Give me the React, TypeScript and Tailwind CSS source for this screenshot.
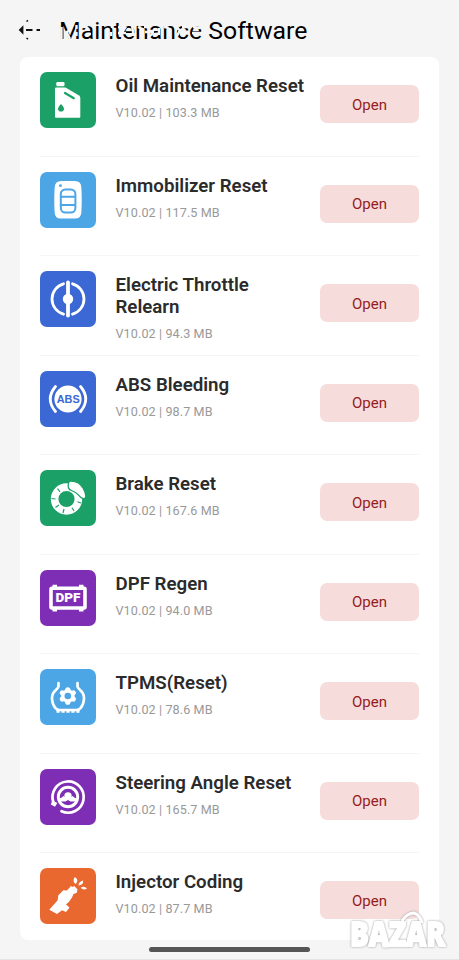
import React from 'react';

interface SoftwareItem {
  name: string;
  size: string;
  color: string;
  icon: React.ReactNode;
}

const OilIcon = () => (
  <>
    <path d="M16 15.500h9.500l13.500 8q1.300.8 1.300 2.500v18.700q0 1-1 1h-23.300q-1 0-1-1v-28.200q0-1 1-1z" fill="#fff" />
    <rect x="16.300" y="10" width="8.200" height="4.300" rx="1.200" fill="#fff" />
    <path d="M25 21l8.800 5.200" stroke="#1ba167" strokeWidth="2.200" strokeLinecap="round" />
    <path d="M21 32q3 3.300 3 4.800a3 2.800 0 0 1-6 0q0-1.500 3-4.800z" fill="#1ba167" />
  </>
);

const KeyIcon = () => (
  <>
    <path d="M21 9h14q6 0 6.300 6c.6 9 .6 17 0 26q-.5 5.500-6.300 5.500h-14q-6 0-6.300-5.500c-.6-9-.6-17 0-26q.5-6 6.300-6z" fill="#fff" />
    <rect x="20.800" y="17.500" width="14.600" height="23" rx="4.500" fill="none" stroke="#4ca6e6" strokeWidth="2" />
    <path d="M20.500 24.700h15M20.500 33h15" stroke="#4ca6e6" strokeWidth="2" />
    <circle cx="20.500" cy="13.700" r="1.400" fill="#4ca6e6" />
  </>
);

const ThrottleIcon = () => (
  <>
    <g fill="none" stroke="#fff" strokeWidth="2.800" strokeLinecap="round">
      <path d="M23.500 12.800a15.800 15.800 0 0 0 0 30.400M32.500 12.800a15.800 15.800 0 0 1 0 30.400" />
      <path d="M28 11.500v33" strokeWidth="3.800" />
    </g>
    <circle cx="28" cy="28" r="5.200" fill="#fff" />
  </>
);

const AbsIcon = () => (
  <>
    <circle cx="28" cy="28" r="13.600" fill="#fff" />
    <path d="M15.500 15.500q-10.500 12.500 0 25M40.500 15.500q10.500 12.500 0 25" fill="none" stroke="#fff" strokeWidth="2.800" strokeLinecap="round" />
    <text x="28.200" y="31.800" textAnchor="middle" fontSize="10.800" fontWeight="700" textLength="23" lengthAdjust="spacingAndGlyphs" fill="#3b68d4" className="font-['Liberation_Sans',sans-serif]">ABS</text>
  </>
);

const BrakeIcon = () => (
  <>
    <circle cx="26.500" cy="29" r="11.900" fill="none" stroke="#fff" strokeWidth="7.600" />
    <path d="M17.500 18.500l2.500 3.500M11.500 28.500l4 .5M15.500 37.500l3.500-2.500M23 43l1-4M34 41l-2-3.300M41 33l-3.500-1.200" stroke="#1ba167" strokeWidth="1.200" />
    <path d="M29.500 11.300q9-.8 13.500 6.700q2.200 3.800 2.800 7.700q.2 3.300-3 2.800q-1.800-.5-4-3.200q-2.500-3-7.300-4.800q-3.800-1.500-3.300-5.500q.1-2.700 1.300-3.700z" fill="#fff" stroke="#1ba167" strokeWidth="1.300" />
  </>
);

const DpfIcon = () => (
  <>
    <rect x="11" y="18.200" width="34" height="19.800" rx="1" fill="none" stroke="#fff" strokeWidth="3.600" />
    <path d="M12.500 16h4.500M39 16h4.500M12.500 40.200h4.500M39 40.200h4.500" stroke="#fff" strokeWidth="2.400" />
    <text x="28" y="32.300" textAnchor="middle" fontSize="12.300" fontWeight="900" textLength="25" lengthAdjust="spacingAndGlyphs" fill="#fff" className="font-['Roboto',sans-serif]">DPF</text>
  </>
);

const TpmsIcon = () => (
  <>
    <path d="M18.500 14.200v3c0 3.500-6.500 4-6.500 11.500q0 6 3.500 10.500q1.500 1.800 4 1.800h17q2.500 0 4-1.800q3.500-4.500 3.500-10.500c0-7.500-6.500-8-6.500-11.500v-3" fill="none" stroke="#fff" strokeWidth="2.700" strokeLinecap="round" />
    <path d="M16.500 42.300h23" stroke="#fff" strokeWidth="3" strokeDasharray="3.200 1.750" />
    <g stroke="#fff" strokeWidth="5.200" strokeLinecap="round">
      <path d="M27.800 20.800v12.400M22.400 23.900l10.800 6.200M33.200 23.900l-10.800 6.200" />
    </g>
    <circle cx="27.800" cy="27" r="6.800" fill="#fff" />
    <circle cx="27.800" cy="27" r="3.300" fill="#4ca6e6" />
  </>
);

const SteeringIcon = () => (
  <>
    <g fill="none" stroke="#fff">
      <path d="M13.300 33a15.600 15.600 0 1 1 8.200 9.200" strokeWidth="2.700" strokeLinecap="round" />
      <circle cx="28" cy="28" r="9.700" strokeWidth="2.900" />
      <path d="M19.500 31q2.500 0 5-3M36.500 31q-2.500 0-5-3" strokeWidth="3" />
    </g>
    <path d="M10.800 35.500l1.500-4l5 2.500l-2.300 3.800z" fill="#fff" />
    <circle cx="28" cy="27" r="3.700" fill="#fff" />
    <path d="M24.500 28h7l3.500 4.500h-4.500l-2.500-1.500l-2.500 1.500h-4.500z" fill="#fff" />
  </>
);

const InjectorIcon = () => (
  <>
    <path d="M9.300 41.700l8.400-9.400l.5-4.800l5.100-5.200l3.500.2l3-3l1.200-1.500l1.700 1l1.500-1l3.300 3.200l-.7 3.600l-3.300 1.200l-1.500 3.500l-3.200 4.500l-2.800 2.500l3.500 3l-3.500 4.500l-4-1.800l-5 3.800z" fill="#fff" />
    <path d="M34.800 9q4.500 3 1 7q-4-2.500-1-7zM43.200 12.500q0 4.800-4.700 5q.2-4 4.700-5zM47 20.600q-3.500 2.300-6.300-.8q3.500-2.400 6.300.8z" fill="#fff" />
  </>
);

const ITEMS: SoftwareItem[] = [
  { name: 'Oil Maintenance Reset', size: '103.3 MB', color: 'bg-[#1ba167]', icon: <OilIcon /> },
  { name: 'Immobilizer Reset', size: '117.5 MB', color: 'bg-[#4ca6e6]', icon: <KeyIcon /> },
  { name: 'Electric Throttle Relearn', size: '94.3 MB', color: 'bg-[#3b68d4]', icon: <ThrottleIcon /> },
  { name: 'ABS Bleeding', size: '98.7 MB', color: 'bg-[#3b68d4]', icon: <AbsIcon /> },
  { name: 'Brake Reset', size: '167.6 MB', color: 'bg-[#1ba167]', icon: <BrakeIcon /> },
  { name: 'DPF Regen', size: '94.0 MB', color: 'bg-[#7e2eb5]', icon: <DpfIcon /> },
  { name: 'TPMS(Reset)', size: '78.6 MB', color: 'bg-[#4ca6e6]', icon: <TpmsIcon /> },
  { name: 'Steering Angle Reset', size: '165.7 MB', color: 'bg-[#7e2eb5]', icon: <SteeringIcon /> },
  { name: 'Injector Coding', size: '87.7 MB', color: 'bg-[#e96830]', icon: <InjectorIcon /> },
];

const SoftwareRow: React.FC<{ item: SoftwareItem }> = ({ item }) => (
  <li className="flex h-[99.5px] shrink-0 items-start border-b border-[#f5f5f5] pt-[15px] last:border-b-0">
    <svg viewBox="0 0 56 56" className={`h-14 w-14 shrink-0 rounded-[7px] ${item.color}`}>
      {item.icon}
    </svg>
    <div className="ml-[19.5px] w-[204.5px] shrink-0 pt-[3px] pr-3">
      <h2 className="text-[18.7px] leading-[22px] font-semibold text-[#2b2b2b]">{item.name}</h2>
      <p className="mt-[7px] text-[12.6px] leading-[18px] tracking-[0.1px] text-[#999]">V10.02 | {item.size}</p>
    </div>
    <button className="mt-[13px] h-[38px] w-[99px] shrink-0 rounded-[7px] bg-[#f6dddc] pt-[2px] text-[15px] text-[#951b20]">Open</button>
  </li>
);

const Watermark = () => (
  <svg viewBox="0 -8 110 60" className="absolute top-[900px] left-[345px] h-[60px] w-[110px] font-['Open_Sans',sans-serif] drop-shadow-[0.5px_0.5px_0.8px_#999]">
    <path d="M57 13q5-8 12-8q6 2 8 10" fill="none" stroke="#fff" strokeWidth="3" />
    <text y="37.500" fontSize="33.500" fontWeight="800" fill="#fff" stroke="#fff" strokeWidth="2" strokeLinejoin="round" textLength="95" lengthAdjust="spacingAndGlyphs" x="5">BAZAR</text>
    <path d="M45 36l-8 4l9-1" fill="#fff" />
  </svg>
);

const App: React.FC = () => {
  return (
    <div className="relative flex h-[960px] w-[459px] flex-col overflow-hidden border-b border-[#e4e4e4] bg-[#f5f5f5] font-[Roboto,sans-serif]">
      {/* Header */}
      <header className="relative flex h-[57px] shrink-0 items-center pt-1 pl-[18px]">
        <svg viewBox="0 0 24 24" className="h-6 w-6" fill="none" stroke="#111" strokeWidth="2">
          <path d="M2 11l2.500-2.500v5zM8 11h6.500M18.500 11h3.500" fill="#111" strokeWidth="1.800" />
          <path d="M8.500 2.500l1.500-1.200M8.500 19l1.500 1.200" strokeWidth="1.500" />
        </svg>
        <h1 className="ml-[17px] text-[24.8px] leading-8 text-black">Maintenance Software</h1>
        {/* Pale marks worn into the title */}
        <svg viewBox="0 0 150 28" className="absolute top-4 left-[58px] h-7 w-[150px]" fill="none" stroke="#f5f6f8" strokeWidth="2.400">
          <path d="M3.500 11v12M8 15l4 8M14 7l-4 9M18.500 9v4M18.500 16v4M25 11q4-1 5 2M28 18h5M54 8v4M53 16v4M60 11l7 1l-4 6M60 17h8M74 10l1 5v5M80 11l4 2v5M87 16h9M90 22l5-5M86 11h5M101 12v7M106 11q5 0 5 4v4M117 11l5 3l-3 6M124 11h7M134 17h11M135 11l8 1M145 12v5" />
        </svg>
      </header>

      {/* Software list */}
      <main className="mx-5 h-[883px] shrink-0 overflow-hidden rounded-[8px] bg-white px-5">
        <ul className="flex flex-col">
          {ITEMS.map((item) => (
            <SoftwareRow key={item.name} item={item} />
          ))}
        </ul>
      </main>
      <div className="mx-auto mt-[7px] h-[5px] w-[161px] shrink-0 rounded-full bg-[#555]" />
      <Watermark />
    </div>
  );
};

export default App;
